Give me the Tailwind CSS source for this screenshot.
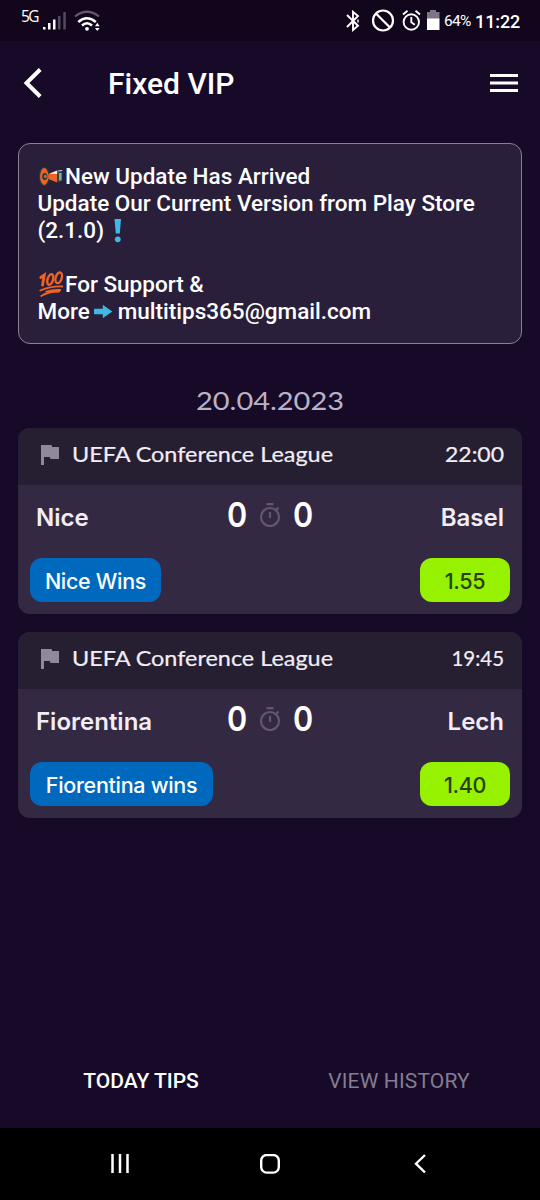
<!DOCTYPE html>
<html lang="en">
<head>
<meta charset="utf-8">
<meta name="viewport" content="width=device-width">
<title>Fixed VIP</title>
<script src="https://cdn.jsdelivr.net/npm/@tailwindcss/browser@4"></script>
</head>
<body class="w-[540px] h-[1200px] overflow-hidden flex flex-col bg-[#160a28] text-white font-['Roboto',sans-serif]">

<header class="h-[41px] shrink-0 bg-[#11061c] flex items-start justify-between pl-[21px] pr-5">
  <div class="flex">
    <span class="w-[22px] pt-[8px] text-[15.500px] leading-4 tracking-[-1.500px] font-['Open_Sans',sans-serif]">5G</span>
    <svg class="mt-3 w-6 h-[18px]" viewBox="0 0 24 18" fill="#fff"><path d="M0 15h2.500v2.500H0zM5 11h2.500v6.500H5zM10 7.500h2.500v10H10z"/><path d="M15 4h2.500v13.500H15zM20.300 0h2.500v17.500h-2.500z" fill="#55495f"/></svg>
    <svg class="mt-2.5 ml-[7px] w-[27px] h-[22px]" viewBox="0 0 27 22" fill="none" stroke-width="2.200"><path d="M1 6.500Q13 -3 25 6.500" stroke="#62576c"/><path d="M4.300 12q8.500-7.500 17.500 0M8 15.500q5-4.500 10 0" stroke="#fff" stroke-width="2.500"/><circle cx="13" cy="18.800" r="1.900" fill="#fff"/><path d="m21 16.300 2.300-3.500 2.300 3.500zm0 1.700h4.600l-2.300 3z" fill="#fff"/></svg>
  </div>
  <div class="flex">
    <svg class="mt-2.5 w-[14px] h-[22px]" viewBox="0 0 14 22" fill="none" stroke="#fff" stroke-width="1.900"><path d="m1 5 11 10.800-5 4.200V1.800l5 4.200L1 17"/><path d="M12 9.500v3" stroke-width="1.400"/></svg>
    <svg class="mt-2 ml-[11px] w-6 h-6" viewBox="0 0 24 24" fill="none" stroke="#fff" stroke-width="2.200"><circle cx="12" cy="12.500" r="10"/><path d="m5 5.500 14 14"/></svg>
    <svg class="mt-2 ml-[7px] w-[19px] h-6" viewBox="0 0 19 24" fill="none" stroke="#fff" stroke-width="1.900"><circle cx="9.300" cy="14" r="7.700"/><path d="M1 6.500 5.500 2.700M13.500 2.700 18 6.500M9.300 9v5.200l3.500 2.500"/></svg>
    <svg class="mt-2.5 ml-1.5 w-[13px] h-5" viewBox="0 0 13 20"><path d="M0 2h3V0h6v2h3.500v7H0z" fill="#7d7583"/><path d="M0 8.500h12.500V20H0z" fill="#fff"/></svg>
    <span class="ml-1 w-[31px] pt-[11px] text-[15.500px] leading-5 tracking-[-0.700px] whitespace-nowrap">64%</span>
    <span class="w-[45px] pt-[12px] text-[18px] leading-5 font-medium tracking-[-0.100px] whitespace-nowrap">11:22</span>
  </div>
</header>

<nav class="h-[84px] shrink-0 flex items-center px-[22px]">
  <svg class="w-5 h-[30px]" viewBox="0 0 20 30" fill="none" stroke="#fff" stroke-width="4"><path d="M18.200 1.500 4.500 15l13.700 13.500"/></svg>
  <h1 class="ml-[66px] pt-0.5 text-[30px] leading-9 font-medium">Fixed VIP</h1>
  <svg class="ml-auto w-[28px] h-5" viewBox="0 0 28 20" fill="#fff"><path d="M0 1h28v3H0zM0 8.500h28v3H0zM0 16h28v3H0z"/></svg>
</nav>

<section class="mx-[18px] mt-[18px] h-[201px] shrink-0 rounded-[12px] border border-[#8a8096] bg-[#2a1f3b] pl-[18.500px] pt-[19px] text-[22.500px] leading-[27px] font-medium">
  <div class="flex items-center h-[27px]">
    <svg class="w-[27.500px] h-[27px] shrink-0" viewBox="0 0 27 27"><ellipse cx="6" cy="13.500" rx="4.800" ry="9" fill="#ed6326" stroke="#213d3e" stroke-width="1.200"/><ellipse cx="6.500" cy="13.500" rx="2.600" ry="3.500" fill="#263b3c"/><circle cx="7" cy="13.500" r="1.400" fill="#ed6326"/><path d="m10 11 9-3.500v12L10 16z" fill="#ed6326"/><path d="m11 10.700 8-3.200v3.500z" fill="#eee"/><path d="m19.500 7.500 4.500 2v8l-4.500 2z" fill="#26494a"/><path d="M22 10v7.500" stroke="#82aaa6" stroke-width="2.500"/><path d="m20 8 4-.500" stroke="#ddd"/></svg>
    <span>New Update Has Arrived</span>
  </div>
  <div class="whitespace-nowrap">Update Our Current Version from Play Store</div>
  <div class="flex items-center h-[27px]">
    <span>(2.1.0)</span>
    <svg class="w-[27px] h-[27px]" viewBox="0 0 27 27" fill="#3eb8e4"><path d="M10.500 2h6.500l-1.200 14.500h-4z"/><circle cx="13.800" cy="22.300" r="2.900"/></svg>
  </div>
  <div class="flex items-center h-[27px] mt-[27px]">
    <svg class="w-[27.500px] h-[27px] shrink-0 overflow-visible" viewBox="0 0 27 27" fill="none" stroke="#ed6326" stroke-linecap="round"><path d="M2.500 6.500 6 4 4.300 14" stroke-width="2.800"/><ellipse cx="12" cy="8.500" rx="2.700" ry="5.500" transform="rotate(17 12 8.500)" stroke-width="2.400"/><ellipse cx="20.500" cy="6.800" rx="3" ry="5.500" transform="rotate(17 20.500 6.800)" stroke-width="2.400"/><path d="M2 19.500q11-4.500 22-4" stroke-width="1.800"/><path d="M3 25q7-4.500 18-4.500M8 20.500q7-2 14-1.500" stroke-width="1.800"/></svg>
    <span>For Support &amp;</span>
  </div>
  <div class="flex items-center h-[27px]">
    <span>More</span>
    <svg class="w-[28px] h-[27px]" viewBox="0 0 28 27" fill="#3eb8e4"><path d="M4.500 10.700h8.300v-3q0-1 1-.300l8.500 6.100-8.500 6.100q-1 .700-1-.300v-3H4.500q-.500 0-.500-.800v-4q0-.800.500-.800z"/></svg>
    <span>multitips365@gmail.com</span>
  </div>
</section>

<main class="px-[18px] pt-[38px] flex-1">
  <svg class="block mx-auto w-[150px] h-9" viewBox="0 0 150 36" fill="#bbb2c4" font-family="Lato, sans-serif" font-size="25.500"><text x="1" y="28" textLength="148" lengthAdjust="spacingAndGlyphs">20.04.2023</text></svg>

  <article class="mt-[10px] h-[186px] rounded-[12px] overflow-hidden bg-[#342943]">
    <div class="h-[57px] bg-[#261e31] flex items-center pl-[23px] pr-[16px]">
      <svg class="w-[19px] h-5 -mt-1" viewBox="0 0 19 20" fill="#918899"><path d="M0 0h10.500l.700 2H18v12H9.500l-.700-2H3v8H0z"/></svg>
      <svg class="ml-3 w-[264px] h-8 -mt-1" viewBox="0 0 264 32" fill="#f1edf5" stroke="#f1edf5" stroke-width="0.200" font-family="Lato, sans-serif" font-size="20.500"><text x="0" y="23" textLength="261" lengthAdjust="spacingAndGlyphs">UEFA Conference League</text></svg>
      <svg class="ml-auto w-[64px] h-8 -mt-1" viewBox="0 0 64 32" fill="#f1edf5" stroke="#f1edf5" stroke-width="0.200" font-family="Lato, sans-serif" font-size="20.500"><text x="3" y="23" textLength="59" lengthAdjust="spacingAndGlyphs">22:00</text></svg>
    </div>
    <div class="h-[64px] pt-0.5 px-[18px] grid grid-cols-[1fr_88px_1fr] items-center font-['Inter',sans-serif] font-semibold text-[24px] text-[#f1edf5]">
      <span>Nice</span>
      <div class="flex items-center justify-between -mt-1.5 text-[34px] leading-10 text-white">
        <span class="scale-x-90">0</span>
        <svg class="w-[22px] h-6" viewBox="0 0 22 24" fill="none" stroke="#625770" stroke-width="2.200"><circle cx="11" cy="14" r="9"/><path d="M7.500 1.200h7M11 9v6M17.500 6.500l2-2"/></svg>
        <span class="scale-x-90">0</span>
      </div>
      <span class="text-right">Basel</span>
    </div>
    <div class="px-3 pt-[9px] flex justify-between font-['Inter',sans-serif] font-medium text-[21.500px] tracking-[-0.300px]">
      <span class="w-[131px] h-11 pt-0.5 rounded-[12px] bg-[#0069bd] flex items-center justify-center whitespace-nowrap">Nice Wins</span>
      <span class="w-[90px] h-11 pt-0.5 rounded-[12px] bg-[#96f200] text-[#2b4011] flex items-center justify-center">1.55</span>
    </div>
  </article>

  <article class="mt-[18px] h-[186px] rounded-[12px] overflow-hidden bg-[#342943]">
    <div class="h-[57px] bg-[#261e31] flex items-center pl-[23px] pr-[16px]">
      <svg class="w-[19px] h-5 -mt-1" viewBox="0 0 19 20" fill="#918899"><path d="M0 0h10.500l.700 2H18v12H9.500l-.700-2H3v8H0z"/></svg>
      <svg class="ml-3 w-[264px] h-8 -mt-1" viewBox="0 0 264 32" fill="#f1edf5" stroke="#f1edf5" stroke-width="0.200" font-family="Lato, sans-serif" font-size="20.500"><text x="0" y="23" textLength="261" lengthAdjust="spacingAndGlyphs">UEFA Conference League</text></svg>
      <svg class="ml-auto w-[64px] h-8 -mt-1" viewBox="0 0 64 32" fill="#f1edf5" stroke="#f1edf5" stroke-width="0.200" font-family="Lato, sans-serif" font-size="20.500"><text x="9.500" y="23" textLength="52.500" lengthAdjust="spacingAndGlyphs">19:45</text></svg>
    </div>
    <div class="h-[64px] pt-0.5 px-[18px] grid grid-cols-[1fr_88px_1fr] items-center font-['Inter',sans-serif] font-semibold text-[24px] text-[#f1edf5]">
      <span>Fiorentina</span>
      <div class="flex items-center justify-between -mt-1.5 text-[34px] leading-10 text-white">
        <span class="scale-x-90">0</span>
        <svg class="w-[22px] h-6" viewBox="0 0 22 24" fill="none" stroke="#625770" stroke-width="2.200"><circle cx="11" cy="14" r="9"/><path d="M7.500 1.200h7M11 9v6M17.500 6.500l2-2"/></svg>
        <span class="scale-x-90">0</span>
      </div>
      <span class="text-right">Lech</span>
    </div>
    <div class="px-3 pt-[9px] flex justify-between font-['Inter',sans-serif] font-medium text-[21.500px] tracking-[-0.300px]">
      <span class="w-[183px] h-11 pt-0.5 rounded-[12px] bg-[#0069bd] flex items-center justify-center whitespace-nowrap">Fiorentina wins</span>
      <span class="w-[90px] h-11 pt-0.5 rounded-[12px] bg-[#96f200] text-[#2b4011] flex items-center justify-center">1.40</span>
    </div>
  </article>
</main>

<div class="h-[96px] shrink-0 grid grid-cols-2 text-center text-[21px] leading-6 pt-[37px] px-3">
  <span class="font-medium">TODAY TIPS</span>
  <span class="text-[#857c91] tracking-[0.150px]">VIEW HISTORY</span>
</div>

<footer class="h-[72px] shrink-0 bg-black flex items-center justify-between px-[110px]">
  <svg class="w-5 h-5" viewBox="0 0 20 20" stroke="#fff" stroke-width="2.500"><path d="M2.500 0v19M10 0v19M17.500 0v19"/></svg>
  <svg class="w-5 h-5" viewBox="0 0 20 20" fill="none" stroke="#fff" stroke-width="2.400"><rect x="1.200" y="1" width="17.600" height="17.600" rx="5.500"/></svg>
  <svg class="w-5 h-5" viewBox="0 0 20 20" fill="none" stroke="#fff" stroke-width="2.400"><path d="M15 1 6 9.700l9 8.800"/></svg>
</footer>
</body>
</html>
